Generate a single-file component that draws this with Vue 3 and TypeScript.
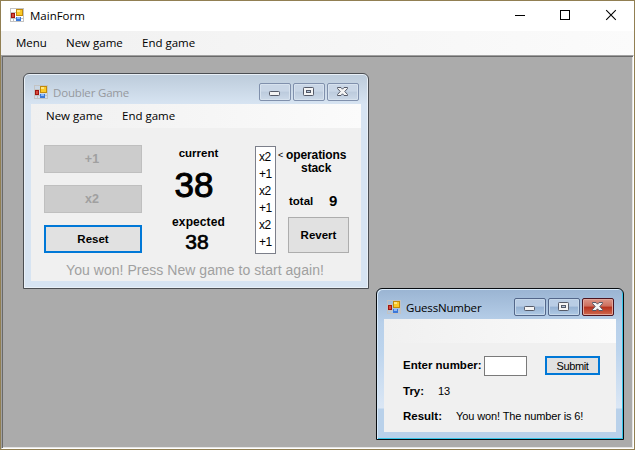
<script setup lang="ts">
import { ref, h } from 'vue'

const current = ref<number>(38)
const expected = ref<number>(38)
const operations = ref<string[]>(['x2', '+1', 'x2', '+1', 'x2', '+1'])
const total = ref<number>(9)
const tries = ref<number>(13)
const answer = ref<string>('')

const FormIcon = () =>
  h('svg', { width: 14, height: 14, viewBox: '0 0 14 14', 'shape-rendering': 'crispEdges' }, [
    h('path', { d: 'M.5 .5H13.5V13.5H.5zM.5 4.5H6M3.5 9V13M.5 10.5H13M10.5 9V13', fill: 'none', stroke: '#c3c3c3' }),
    h('rect', { x: 6, y: 1, width: 7, height: 7, fill: '#c28a0c' }),
    h('rect', { x: 7, y: 2, width: 5, height: 5, fill: '#fbc928' }),
    h('rect', { x: 7, y: 2, width: 3, height: 2, fill: '#ffe680' }),
    h('rect', { x: 1, y: 5, width: 4, height: 5, fill: '#a01410' }),
    h('rect', { x: 2, y: 6, width: 2, height: 3, fill: '#d64a3c' }),
    h('rect', { x: 6, y: 9, width: 5, height: 4, fill: '#3c78d8' }),
    h('rect', { x: 7, y: 9, width: 3, height: 2, fill: '#8cb8f8' }),
  ])

const Captions = () =>
  h('div', { class: 'cap-set' }, [
    h('span', { class: 'cap' }, [
      h('svg', { width: 30, height: 16, viewBox: '0 0 30 16' }, [
        h('rect', { x: 9.5, y: 7.5, width: 10, height: 4, rx: 0.8, fill: '#f4f4f4', stroke: '#555a68' }),
      ]),
    ]),
    h('span', { class: 'cap' }, [
      h('svg', { width: 30, height: 16, viewBox: '0 0 30 16' }, [
        h('rect', { x: 9.5, y: 3.5, width: 10, height: 8, rx: 0.8, fill: '#f4f4f4', stroke: '#555a68' }),
        h('rect', { x: 12.5, y: 6.5, width: 4, height: 2, fill: '#b4c6dc', stroke: '#555a68' }),
      ]),
    ]),
    h('span', { class: 'cap close' }, [
      h('svg', { width: 30, height: 16, viewBox: '0 0 30 16' }, [
        h('path', {
          d: 'M9.5 3.5H13L14.5 5.2L16 3.5H19.5V4.5L16.8 7.5L19.5 10.5V11.5H16L14.5 9.8L13 11.5H9.5V10.5L12.2 7.5L9.5 4.5Z',
          fill: '#f4f4f4',
          stroke: '#555a68',
        }),
      ]),
    ]),
  ])
</script>

<template>
  <div class="main-form">
    <header class="main-title">
      <FormIcon />
      <span class="ui main-name">MainForm</span>
      <svg class="sys" width="104" height="12" viewBox="0 0 104 12">
        <path d="M0 6.5H10" stroke="#000" />
        <rect x="45.5" y="1.5" width="9" height="9" fill="none" stroke="#000" />
        <path d="M91.2 1.2L100.8 10.8M100.8 1.2L91.2 10.8" stroke="#000" stroke-width="1.1" />
      </svg>
    </header>
    <nav class="menu main-menu ui">
      <span class="m-menu">Menu</span><span class="m-new">New game</span><span class="m-end">End game</span>
    </nav>
    <main class="mdi">
      <section class="win doubler">
        <header class="bar">
          <FormIcon />
          <span class="ui name">Doubler Game</span>
          <div class="caps"><Captions /></div>
        </header>
        <div class="client">
          <nav class="menu ui"><span class="m-new">New game</span><span class="m-end">End game</span></nav>
          <div class="game">
            <div class="actions">
              <button class="btn off" disabled>+1</button>
              <button class="btn off" disabled>x2</button>
              <button class="btn focus">Reset</button>
            </div>
            <div class="numbers">
              <span class="t-current">current</span>
              <strong class="big">{{ current }}</strong>
              <span class="t-expected">expected</span>
              <strong class="mid">{{ expected }}</strong>
            </div>
            <ul class="stack">
              <li v-for="(op, i) in operations" :key="i">{{ op }}</li>
            </ul>
            <div class="side">
              <div class="hint">
                <span class="arrow">&lt;</span>
                <div class="hint-text"><span>operations</span><span>stack</span></div>
              </div>
              <div class="total"><span>total</span><strong>{{ total }}</strong></div>
              <button class="btn revert">Revert</button>
            </div>
          </div>
          <p class="status">You won! Press New game to start again!</p>
        </div>
      </section>

      <section class="win guess">
        <header class="bar">
          <FormIcon />
          <span class="ui name">GuessNumber</span>
          <div class="caps"><Captions /></div>
        </header>
        <div class="client">
          <nav class="menu"></nav>
          <form class="form" @submit.prevent>
            <div class="row entry">
              <label for="number">Enter number:</label>
              <input id="number" v-model="answer" />
              <button class="btn focus submit">Submit</button>
            </div>
            <div class="row try"><b class="t-try">Try:</b><span>{{ tries }}</span></div>
            <div class="row"><b class="t-result">Result:</b><span class="v-result">You won! The number is 6!</span></div>
          </form>
        </div>
      </section>
    </main>
  </div>
</template>

<style>
body { margin: 0; overflow: hidden; }
.cap-set { display: flex; gap: 2px; }
.cap {
  box-sizing: border-box; width: 32px; height: 18px; border: 1px solid #8090ac; border-radius: 2px;
  background: linear-gradient(#c9d6e6 0 45%, #bccbdd 50%, #ccd9e8); box-shadow: inset 0 0 0 1px #d7e2ee;
}
.cap svg { display: block; }
.guess .cap { border-color: #53678a; background: linear-gradient(#b9cde5 0 45%, #96b2d3 50%, #b0cae5); box-shadow: inset 0 0 0 1px #c6d8ea; }
.guess .cap.close { border-color: #4c1420; background: linear-gradient(#dc9688 0, #cd6e5c 45%, #b6301c 50%, #cf6a50); box-shadow: inset 0 0 0 1px #e2a79b; }
</style>

<style scoped>
* { box-sizing: border-box; }
.main-form {
  width: 635px; height: 450px; border: 1px solid #917f52; background: #fff; display: flex; flex-direction: column;
  font: 11px/14px "Liberation Sans", Arial, sans-serif; color: #000;
}
.ui { font-family: "Open Sans", "Noto Sans", sans-serif; font-size: 11.5px; line-height: 16px; white-space: nowrap; }
.main-title { height: 30px; display: flex; align-items: center; padding: 0 15px 0 9px; flex: none; }
.main-title > svg:first-child { margin-bottom: 2px; }
.main-name { margin-left: 6px; }
.sys { margin-left: auto; margin-bottom: 2px; }
.menu { height: 24px; display: flex; align-items: center; flex: none; background: linear-gradient(90deg, #f0f0f0, #fbfbfb); padding-left: 15px; }
.m-new { width: 76px; }
.main-menu .m-menu { width: 50px; }
.mdi {
  flex: 1; position: relative; background: #ababab; border: 1px solid; border-color: #a0a0a0 #fff #fff #a0a0a0;
  box-shadow: inset 1px 1px #696969, inset -1px -1px #e3e3e3;
}
.win { position: absolute; border: 1px solid #4b4e52; border-radius: 6px 6px 0 0; display: flex; flex-direction: column; }
.bar { flex: none; display: flex; align-items: center; }
.name { margin-left: 5px; letter-spacing: -0.18px; }
.caps { margin-left: auto; align-self: flex-start; }
.client { background: #f0f0f0; flex: 1; display: flex; flex-direction: column; }

.doubler { left: 21px; top: 17px; width: 346px; height: 216px; padding: 0 7px 7px; background: linear-gradient(#bccbda, #d7e4f2 30px); box-shadow: inset 0 0 0 1px #e9f0f7; }
.doubler .bar { height: 30px; padding: 6px 2px 0 3px; }
.doubler .bar > svg { margin-bottom: 1px; }
.doubler .name { color: #96999e; padding-top: 1px; }
.doubler .caps { margin-top: 3px; }
.game { display: flex; height: 134px; }
.actions { width: 98px; margin: 17px 0 0 13px; display: flex; flex-direction: column; gap: 12px; }
.btn { padding: 0; margin: 0; background: #e1e1e1; border: 1px solid #adadad; font: bold 11.5px/14px "Liberation Sans", Arial, sans-serif; color: #000; display: flex; align-items: center; justify-content: center; height: 28px; }
.btn.off { background: #ccc; border-color: #bfbfbf; color: #a0a0a0; font-size: 12.5px; padding-right: 2px; }
.btn.focus { border: 2px solid #0078d7; }
.numbers { width: 113px; display: flex; flex-direction: column; align-items: center; font-weight: bold; padding-top: 18px; }
.t-current { font-size: 11.5px; }
.big, .mid { font-weight: normal; -webkit-text-stroke: 1px #000; }
.big { font-size: 35px; line-height: 38px; margin-top: 6px; margin-right: 9px; }
.t-expected { margin-top: 11px; font-size: 12px; letter-spacing: 0.1px; }
.mid { font-size: 21px; line-height: 24px; margin-top: 1px; margin-right: 3px; -webkit-text-stroke-width: 0.7px; }
.stack { list-style: none; margin: 18px 0 0; padding: 2px 0 0 3px; width: 21px; height: 108px; background: #fff; border: 1px solid #7c7f8a; font-size: 12px; line-height: 17px; letter-spacing: -0.4px; }
.side { width: 85px; padding-top: 21px; font-weight: bold; }
.hint { display: flex; height: 28px; }
.arrow { width: 10px; padding-left: 2px; font-size: 9px; line-height: 13px; font-weight: normal; }
.hint-text { display: flex; flex-direction: column; font-size: 12px; line-height: 13px; align-items: center; letter-spacing: -0.1px; }
.total { display: flex; margin: 17px 0 0 13px; height: 14px; align-items: center; font-size: 11.5px; }
.total span { width: 25px; }
.total strong { margin-left: 15px; font-size: 15px; }
.revert { width: 61px; height: 36px; margin: 9px 0 0 12px; }
.status { margin: 0; text-align: center; color: #a0a0a0; font-size: 14px; letter-spacing: 0.04px; line-height: 17px; white-space: nowrap; padding-right: 2px; }

.guess { left: 374px; top: 232px; width: 248px; height: 152px; border-color: #080c10; padding: 0 7px 7px; background: linear-gradient(#9ab4d2, #b8d0ea 34px, #bcd4ed 60px, #dbe7f5 119px, #b9d1ea 120px); box-shadow: inset 1px 1px #d8eafa, inset -1px -1px #35c5e8; }
.guess .bar { height: 30px; padding: 7px 2px 0 3px; }
.guess .bar > svg { margin-bottom: 1px; }
.guess .caps { margin-top: 2px; }
.form { padding: 13px 0 0 19px; }
.row { display: flex; height: 20px; align-items: center; white-space: nowrap; }
.row label { font-weight: bold; font-size: 11.5px; width: 81px; padding-bottom: 2px; }
.row input { width: 43px; height: 20px; border: 1px solid #7a7a7a; padding: 0; background: #fff; }
.row b { font-size: 11.5px; }
.submit { width: 55px; height: 19px; margin-left: 18px; font-size: 11px; font-weight: normal; letter-spacing: -0.35px; margin-bottom: 1px; }
.try { margin: 5px 0; }
.t-try { width: 35px; }
.t-result { width: 53px; }
.v-result { letter-spacing: -0.12px; }
</style>
